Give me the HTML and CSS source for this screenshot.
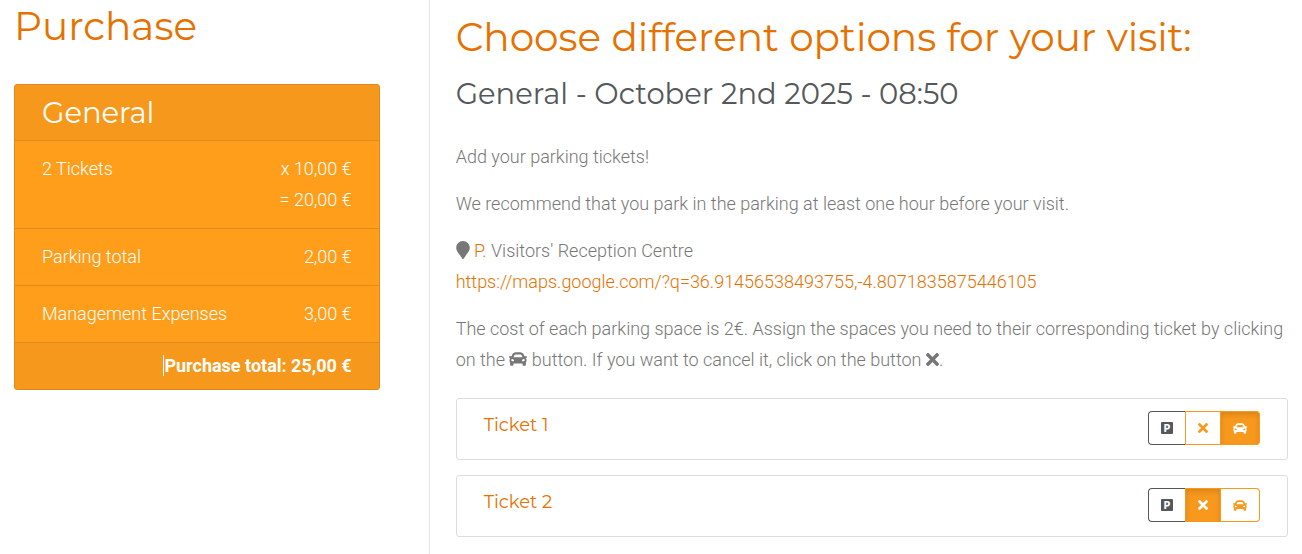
FILE: index.html
```html
<!DOCTYPE html>
<html lang="en">
<head>
    <meta charset="UTF-8">
    <meta name="viewport" content="width=device-width, initial-scale=1.0">
    <title>Purchase</title>
    <link rel="stylesheet" href="styles.css">
</head>
<body>

    <!-- Shared icons -->
    <svg class="sprite" aria-hidden="true">
        <symbol id="icon-car" viewBox="0 64 512 384">
            <path d="M499.99 176h-59.87l-16.64-41.6C406.38 91.63 365.57 64 319.5 64h-127c-46.06 0-86.88 27.63-103.99 70.4L71.87 176H12.01C4.2 176-1.53 183.34.37 190.91l6 24C7.7 220.25 12.5 224 18.01 224h20.07C24.65 235.73 16 252.78 16 272v48c0 16.12 6.16 30.67 16 41.93V416c0 17.67 14.33 32 32 32h32c17.67 0 32-14.33 32-32v-32h256v32c0 17.67 14.33 32 32 32h32c17.67 0 32-14.33 32-32v-54.07c9.84-11.25 16-25.8 16-41.93v-48c0-19.22-8.65-36.27-22.07-48H494c5.51 0 10.31-3.75 11.64-9.09l6-24c1.89-7.57-3.84-14.91-11.65-14.91zm-352.06-17.83c7.29-18.22 24.94-30.17 44.57-30.17h127c19.63 0 37.28 11.95 44.57 30.17L384 208H128l19.93-49.83zM96 319.8c-19.2 0-32-12.76-32-31.9S76.8 256 96 256s48 28.71 48 47.85-28.8 15.95-48 15.95zm320 0c-19.2 0-48 3.19-48-15.95S396.8 256 416 256s32 12.76 32 31.9-12.8 31.9-32 31.9z"/>
        </symbol>
        <symbol id="icon-times" viewBox="0 80 352 352">
            <path d="M242.72 256l100.07-100.07c12.28-12.28 12.28-32.19 0-44.48l-22.24-22.24c-12.28-12.28-32.19-12.28-44.48 0L176 189.28 75.93 89.21c-12.28-12.28-32.19-12.28-44.48 0L9.21 111.45c-12.28 12.28-12.28 32.19 0 44.48L109.28 256 9.21 356.07c-12.28 12.28-12.28 32.19 0 44.48l22.24 22.24c12.28 12.28 32.2 12.28 44.48 0L176 322.72l100.07 100.07c12.28 12.28 32.2 12.28 44.48 0l22.24-22.24c12.28-12.28 12.28-32.19 0-44.48L242.72 256z"/>
        </symbol>
        <symbol id="icon-marker" viewBox="0 0 384 512">
            <path d="M172.268 501.67C26.97 291.031 0 269.413 0 192 0 85.961 85.961 0 192 0s192 85.961 192 192c0 77.413-26.97 99.031-172.268 309.67-9.535 13.774-29.93 13.773-39.464 0z"/>
        </symbol>
    </svg>

    <div class="container">

        <aside class="sidebar">
            <h1>Purchase</h1>

            <div class="summary">
                <table>
                    <thead>
                        <tr><th colspan="2">General</th></tr>
                    </thead>
                    <tbody>
                        <tr>
                            <td>2 Tickets</td>
                            <td class="amount">x 10,00 €<br>= 20,00 €</td>
                        </tr>
                        <tr>
                            <td>Parking total</td>
                            <td class="amount">2,00 €</td>
                        </tr>
                        <tr>
                            <td>Management Expenses</td>
                            <td class="amount">3,00 €</td>
                        </tr>
                    </tbody>
                    <tfoot>
                        <tr>
                            <td colspan="2"><span class="caret">Purchase total: 25,00 €</span></td>
                        </tr>
                    </tfoot>
                </table>
            </div>
        </aside>

        <main class="content">
            <h1>Choose different options for your visit:</h1>
            <h2>General - October 2nd 2025 - 08:50</h2>

            <p>Add your parking tickets!</p>
            <p>We recommend that you park in the parking at least one hour before your visit.</p>
            <p>
                <svg class="icon icon-marker"><use href="#icon-marker"/></svg>
                <span class="highlight">P.</span> Visitors' Reception Centre<br>
                <a href="https://maps.google.com/?q=36.91456538493755,-4.8071835875446105">https://maps.google.com/?q=36.91456538493755,-4.8071835875446105</a>
            </p>
            <p>
                The cost of each parking space is 2€. Assign the spaces you need to their corresponding ticket by clicking
                on the <svg class="icon icon-car"><use href="#icon-car"/></svg> button. If you want to cancel it, click on the button <svg class="icon icon-times"><use href="#icon-times"/></svg>.
            </p>

            <div class="tickets">
                <div class="ticket">
                    <h3>Ticket 1</h3>
                    <div class="btn-group">
                        <button type="button" class="btn btn-dark" aria-label="Parking"><span class="parking">P</span></button>
                        <button type="button" class="btn btn-cancel" aria-label="Cancel parking"><svg><use href="#icon-times"/></svg></button>
                        <button type="button" class="btn btn-car active" aria-label="Add parking"><svg><use href="#icon-car"/></svg></button>
                    </div>
                </div>
                <div class="ticket">
                    <h3>Ticket 2</h3>
                    <div class="btn-group">
                        <button type="button" class="btn btn-dark" aria-label="Parking"><span class="parking">P</span></button>
                        <button type="button" class="btn btn-cancel active" aria-label="Cancel parking"><svg><use href="#icon-times"/></svg></button>
                        <button type="button" class="btn btn-car" aria-label="Add parking"><svg><use href="#icon-car"/></svg></button>
                    </div>
                </div>
            </div>
        </main>

    </div>

</body>
</html>
```

FILE: styles.css
```css
* {
    box-sizing: border-box;
}

body {
    margin: 0;
    font-family: Roboto, "Liberation Sans", sans-serif;
    font-size: 18px;
    font-weight: 300;
    line-height: 31px;
    color: #777;
    background-color: #fff;
}

.sprite {
    display: none;
}

.container {
    display: flex;
    min-height: 100vh;
}

.sidebar {
    width: calc(33% - 1px);
    flex-shrink: 0;
    padding: 5px 49px 16px 14px;
}

.content {
    flex: 1;
    padding: 16px 14px 16px 26px;
    border-left: 1px solid #e6e6e6;
}

h1, h2, h3 {
    margin: 0;
    font-family: Montserrat, Inter, sans-serif;
    font-weight: 400;
}

h1 {
    font-size: 39px;
    line-height: 42px;
    color: #e57200;
}

h2 {
    margin-top: 19px;
    margin-bottom: 30px;
    font-size: 29px;
    line-height: 34px;
    color: #54585a;
}

h3 {
    font-size: 18px;
    line-height: 28px;
    color: #e57200;
}

p {
    margin: 0 0 16px;
}

a, .highlight {
    color: #e57200;
    text-decoration: none;
}

/* Purchase summary */
.summary {
    margin-top: 37px;
    border: 1px solid #e08a1b;
    border-radius: 3px;
    background-color: #ff9e1b;
    color: #fff;
    overflow: hidden;
}

.summary table {
    width: 100%;
    border-collapse: separate;
    border-spacing: 0;
}

.summary th {
    padding: 11px 27px 10px;
    font-family: Montserrat, Inter, sans-serif;
    font-size: 29px;
    font-weight: 400;
    line-height: 34px;
    text-align: left;
    background-color: #f6981b;
}

.summary td {
    padding: 12px 0 13px 27px;
    border-top: 1px solid #e08a1b;
    vertical-align: top;
}

.summary .amount {
    padding-left: 0;
    padding-right: 27px;
    text-align: right;
}

.summary tfoot td {
    padding: 7px 27px 8px;
    font-weight: 700;
    text-align: right;
    background-color: #f6981b;
}

.caret {
    border-left: 1px solid #fff;
}

/* Icons in text */
.icon {
    fill: currentColor;
}

.icon-marker {
    width: 14px;
    height: 18px;
    vertical-align: -2px;
}

.icon-car {
    width: 18px;
    height: 14px;
    vertical-align: 0;
}

.icon-times {
    width: 13px;
    height: 13px;
    vertical-align: 0;
}

/* Tickets */
.tickets {
    display: flex;
    flex-direction: column;
    gap: 15px;
    padding-top: 7px;
}

.ticket {
    display: flex;
    justify-content: space-between;
    align-items: flex-start;
    padding: 12px 27px 14px;
    border: 1px solid #ddd;
    border-radius: 3px;
}

.btn-group {
    display: flex;
}

.btn {
    display: flex;
    align-items: center;
    justify-content: center;
    height: 34px;
    padding: 0;
    border: 1px solid #f8981d;
    background-color: #fff;
    color: #f8981d;
    cursor: pointer;
}

.btn svg {
    fill: currentColor;
}

.btn-dark {
    width: 37px;
    border-color: #54585a;
    border-right: none;
    border-radius: 4px 0 0 4px;
}

.btn-cancel {
    width: 36px;
}

.btn-cancel svg {
    width: 10px;
    height: 10px;
}

.btn-car {
    width: 39px;
    border-left: none;
    border-radius: 0 4px 4px 0;
}

.btn-car svg {
    width: 14px;
    height: 11px;
}

.btn.active {
    background-color: #f8981d;
    color: #fff;
    box-shadow: inset 0 3px 5px rgba(0, 0, 0, 0.125);
}

.parking {
    width: 12px;
    height: 12px;
    border-radius: 1px;
    background-color: #54585a;
    color: #fff;
    font-family: Inter, sans-serif;
    font-size: 10px;
    font-weight: 800;
    line-height: 12px;
}
```
